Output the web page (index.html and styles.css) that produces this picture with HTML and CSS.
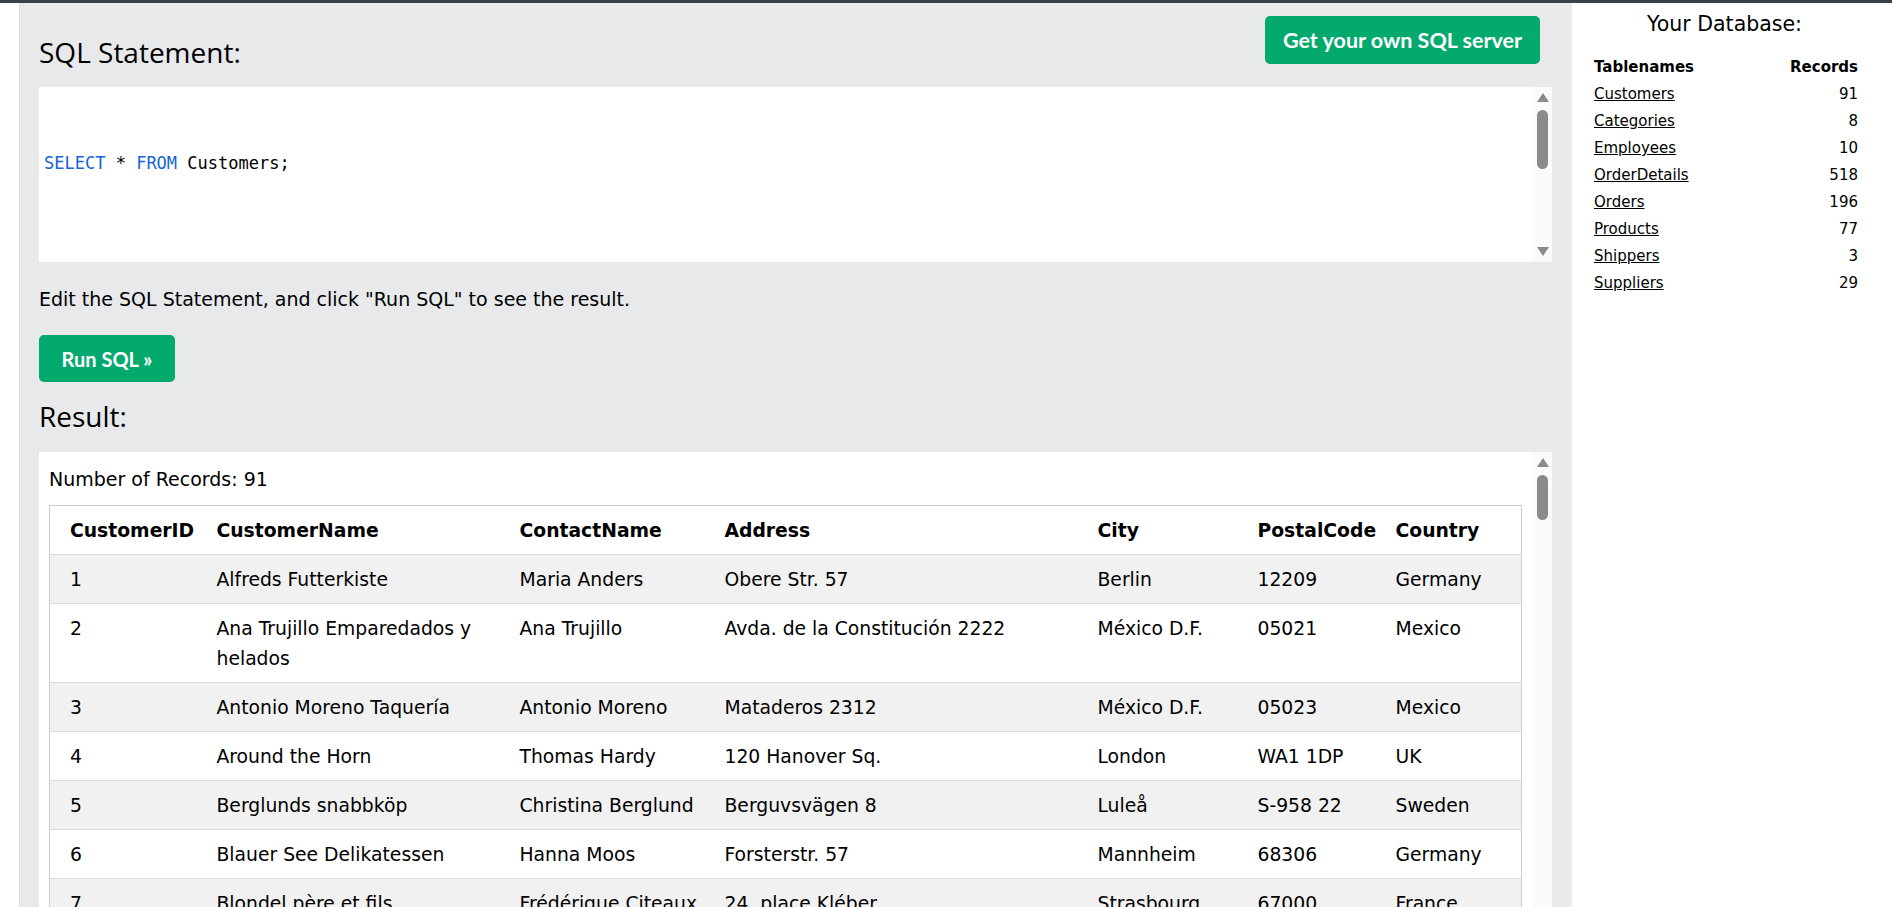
FILE: index.html
```html
<!DOCTYPE html>
<html lang="en">
<head>
<meta charset="utf-8">
<title>SQL Tryit Editor</title>
<link rel="stylesheet" href="styles.css">
</head>
<body>
<div class="topbar"></div>
<div class="main">
  <div class="editor">
    <div class="editor-head">
      <h2 class="heading heading-top">SQL Statement:</h2>
      <a class="btn btn-server" href="#">Get your own SQL server</a>
    </div>
    <div class="box code-box">
      <div class="code-content">
        <pre class="code"><span class="kw">SELECT</span> * <span class="kw">FROM</span> Customers;</pre>
      </div>
      <div class="scrollbar">
        <span class="arrow arrow-up"></span>
        <span class="thumb thumb-code"></span>
        <span class="spacer"></span>
        <span class="arrow arrow-down"></span>
      </div>
    </div>
    <p class="hint">Edit the SQL Statement, and click "Run SQL" to see the result.</p>
    <a class="btn btn-run" href="#">Run SQL &raquo;</a>
    <h2 class="heading heading-result">Result:</h2>
    <div class="box result-box">
      <div class="result-content">
        <p class="count">Number of Records: 91</p>
        <table class="data">
          <colgroup>
            <col class="c1"><col class="c2"><col class="c3"><col class="c4"><col class="c5"><col class="c6"><col class="c7">
          </colgroup>
          <thead>
            <tr><th>CustomerID</th><th>CustomerName</th><th>ContactName</th><th>Address</th><th>City</th><th>PostalCode</th><th>Country</th></tr>
          </thead>
          <tbody>
            <tr><td>1</td><td>Alfreds Futterkiste</td><td>Maria Anders</td><td>Obere Str. 57</td><td>Berlin</td><td>12209</td><td>Germany</td></tr>
            <tr><td>2</td><td>Ana Trujillo Emparedados y helados</td><td>Ana Trujillo</td><td>Avda. de la Constitución 2222</td><td>México D.F.</td><td>05021</td><td>Mexico</td></tr>
            <tr><td>3</td><td>Antonio Moreno Taquería</td><td>Antonio Moreno</td><td>Mataderos 2312</td><td>México D.F.</td><td>05023</td><td>Mexico</td></tr>
            <tr><td>4</td><td>Around the Horn</td><td>Thomas Hardy</td><td>120 Hanover Sq.</td><td>London</td><td>WA1 1DP</td><td>UK</td></tr>
            <tr><td>5</td><td>Berglunds snabbköp</td><td>Christina Berglund</td><td>Berguvsvägen 8</td><td>Luleå</td><td>S-958 22</td><td>Sweden</td></tr>
            <tr><td>6</td><td>Blauer See Delikatessen</td><td>Hanna Moos</td><td>Forsterstr. 57</td><td>Mannheim</td><td>68306</td><td>Germany</td></tr>
            <tr><td>7</td><td>Blondel père et fils</td><td>Frédérique Citeaux</td><td>24, place Kléber</td><td>Strasbourg</td><td>67000</td><td>France</td></tr>
            <tr><td>8</td><td>Bólido Comidas preparadas</td><td>Martín Sommer</td><td>C/ Araquil, 67</td><td>Madrid</td><td>28023</td><td>Spain</td></tr>
            <tr><td>9</td><td>Bon app'</td><td>Laurence Lebihans</td><td>12, rue des Bouchers</td><td>Marseille</td><td>13008</td><td>France</td></tr>
          </tbody>
        </table>
      </div>
      <div class="scrollbar">
        <span class="arrow arrow-up"></span>
        <span class="thumb thumb-result"></span>
        <span class="spacer"></span>
      </div>
    </div>
  </div>
  <aside class="db-panel">
    <h3 class="db-title">Your Database:</h3>
    <table class="db-table">
      <thead>
        <tr><th class="db-name">Tablenames</th><th class="db-num">Records</th></tr>
      </thead>
      <tbody>
        <tr><td class="db-name"><a href="#">Customers</a></td><td class="db-num">91</td></tr>
        <tr><td class="db-name"><a href="#">Categories</a></td><td class="db-num">8</td></tr>
        <tr><td class="db-name"><a href="#">Employees</a></td><td class="db-num">10</td></tr>
        <tr><td class="db-name"><a href="#">OrderDetails</a></td><td class="db-num">518</td></tr>
        <tr><td class="db-name"><a href="#">Orders</a></td><td class="db-num">196</td></tr>
        <tr><td class="db-name"><a href="#">Products</a></td><td class="db-num">77</td></tr>
        <tr><td class="db-name"><a href="#">Shippers</a></td><td class="db-num">3</td></tr>
        <tr><td class="db-name"><a href="#">Suppliers</a></td><td class="db-num">29</td></tr>
      </tbody>
    </table>
  </aside>
</div>
</body>
</html>
```

FILE: styles.css
```css
html, body {
  margin: 0;
  padding: 0;
  height: 100%;
  overflow: hidden;
  background: #ffffff;
  color: #000;
  font-family: "DejaVu Sans", Verdana, sans-serif;
}

.topbar {
  height: 3px;
  background: #36434b;
}

.main {
  display: flex;
  height: calc(100% - 3px);
  padding-left: 19px;
  box-sizing: border-box;
}

.editor {
  flex: 1;
  min-width: 0;
  background: #e7e9eb;
  border-left: 1px solid #dcdee0;
  padding: 0 19px 0 19px;
  overflow: hidden;
}

.editor-head {
  display: flex;
  justify-content: space-between;
  align-items: flex-start;
  padding-top: 13px;
}

.heading {
  font-family: "Open Sans", "Noto Sans", sans-serif;
  font-weight: 400;
  font-size: 28px;
  line-height: 36px;
  margin: 0;
  color: #000;
}

.heading-top {
  margin-top: 18px;
}

.heading-result {
  margin-top: 16px;
}

.btn {
  display: inline-flex;
  align-items: center;
  justify-content: center;
  background: #04aa6d;
  color: #fff;
  text-decoration: none;
  font-family: Lato, "Open Sans", sans-serif;
  font-weight: 700;
  border-radius: 5px;
  box-sizing: border-box;
}

.btn-server {
  height: 48px;
  width: 275px;
  margin-right: 12px;
  font-size: 21.5px;
}

.btn-run {
  height: 47px;
  width: 136px;
  margin-top: 22px;
  font-size: 20px;
}

.box {
  display: flex;
  background: #fff;
}

.code-box {
  height: 175px;
  margin-top: 17px;
}

.code-content {
  flex: 1;
  padding-top: 66px;
  padding-left: 5px;
}

.code {
  margin: 0;
  font-family: "DejaVu Sans Mono", "Liberation Mono", monospace;
  font-size: 17px;
  line-height: 20px;
  color: #000;
}

.kw {
  color: #1664d6;
}

.scrollbar {
  flex: 0 0 19px;
  display: flex;
  flex-direction: column;
  align-items: center;
  background: #fafafa;
  padding: 6px 0;
  box-sizing: border-box;
}

.arrow {
  width: 0;
  height: 0;
  border-left: 6px solid transparent;
  border-right: 6px solid transparent;
}

.arrow-up {
  border-bottom: 9px solid #8a8a8a;
}

.arrow-down {
  border-top: 9px solid #8a8a8a;
}

.thumb {
  width: 11px;
  margin-top: 8px;
  border-radius: 6px;
  background: #8a8a8a;
}

.thumb-code {
  height: 59px;
}

.thumb-result {
  height: 45px;
}

.spacer {
  flex: 1;
}

.hint {
  margin: 23px 0 0 0;
  font-size: 19px;
  line-height: 28px;
}

.result-box {
  margin-top: 18px;
  height: 600px;
}

.result-content {
  flex: 1;
  min-width: 0;
  padding: 13px 11px 0 10px;
}

.count {
  margin: 0 0 12px 0;
  font-size: 19px;
  line-height: 28px;
}

.data {
  width: 100%;
  table-layout: fixed;
  border-collapse: collapse;
  border: 1px solid #cccccc;
  font-size: 18.75px;
  line-height: 30px;
}

.data .c1 { width: 157px; }
.data .c2 { width: 303px; }
.data .c3 { width: 205px; }
.data .c4 { width: 373px; }
.data .c5 { width: 160px; }
.data .c6 { width: 138px; }

.data th,
.data td {
  padding: 10px 10px 8px 10px;
  text-align: left;
  vertical-align: top;
}

.data th:first-child,
.data td:first-child {
  padding-left: 20px;
}

.data th:last-child,
.data td:last-child {
  padding-right: 20px;
}

.data th {
  font-weight: 700;
}

.data tr {
  border-bottom: 1px solid #dddddd;
}

.data tbody tr:nth-child(odd) {
  background: #f1f1f1;
}

.db-panel {
  flex: 0 0 321px;
  box-sizing: border-box;
  border-left: 1px solid #eeeeee;
  padding: 0 15px 0 0;
  background: #fff;
}

.db-title {
  margin: 9px 0 0 0;
  text-align: center;
  font-weight: 400;
  font-size: 20.5px;
  line-height: 24px;
}

.db-table {
  margin: 18px 0 0 22px;
  width: 264px;
  border-collapse: collapse;
  font-size: 15px;
  line-height: 27px;
}

.db-table th,
.db-table td {
  padding: 0;
}

.db-name {
  text-align: left;
}

.db-num {
  text-align: right;
}

.db-table th {
  font-weight: 700;
}

.db-table a {
  color: #000;
  text-decoration: underline;
}
```
